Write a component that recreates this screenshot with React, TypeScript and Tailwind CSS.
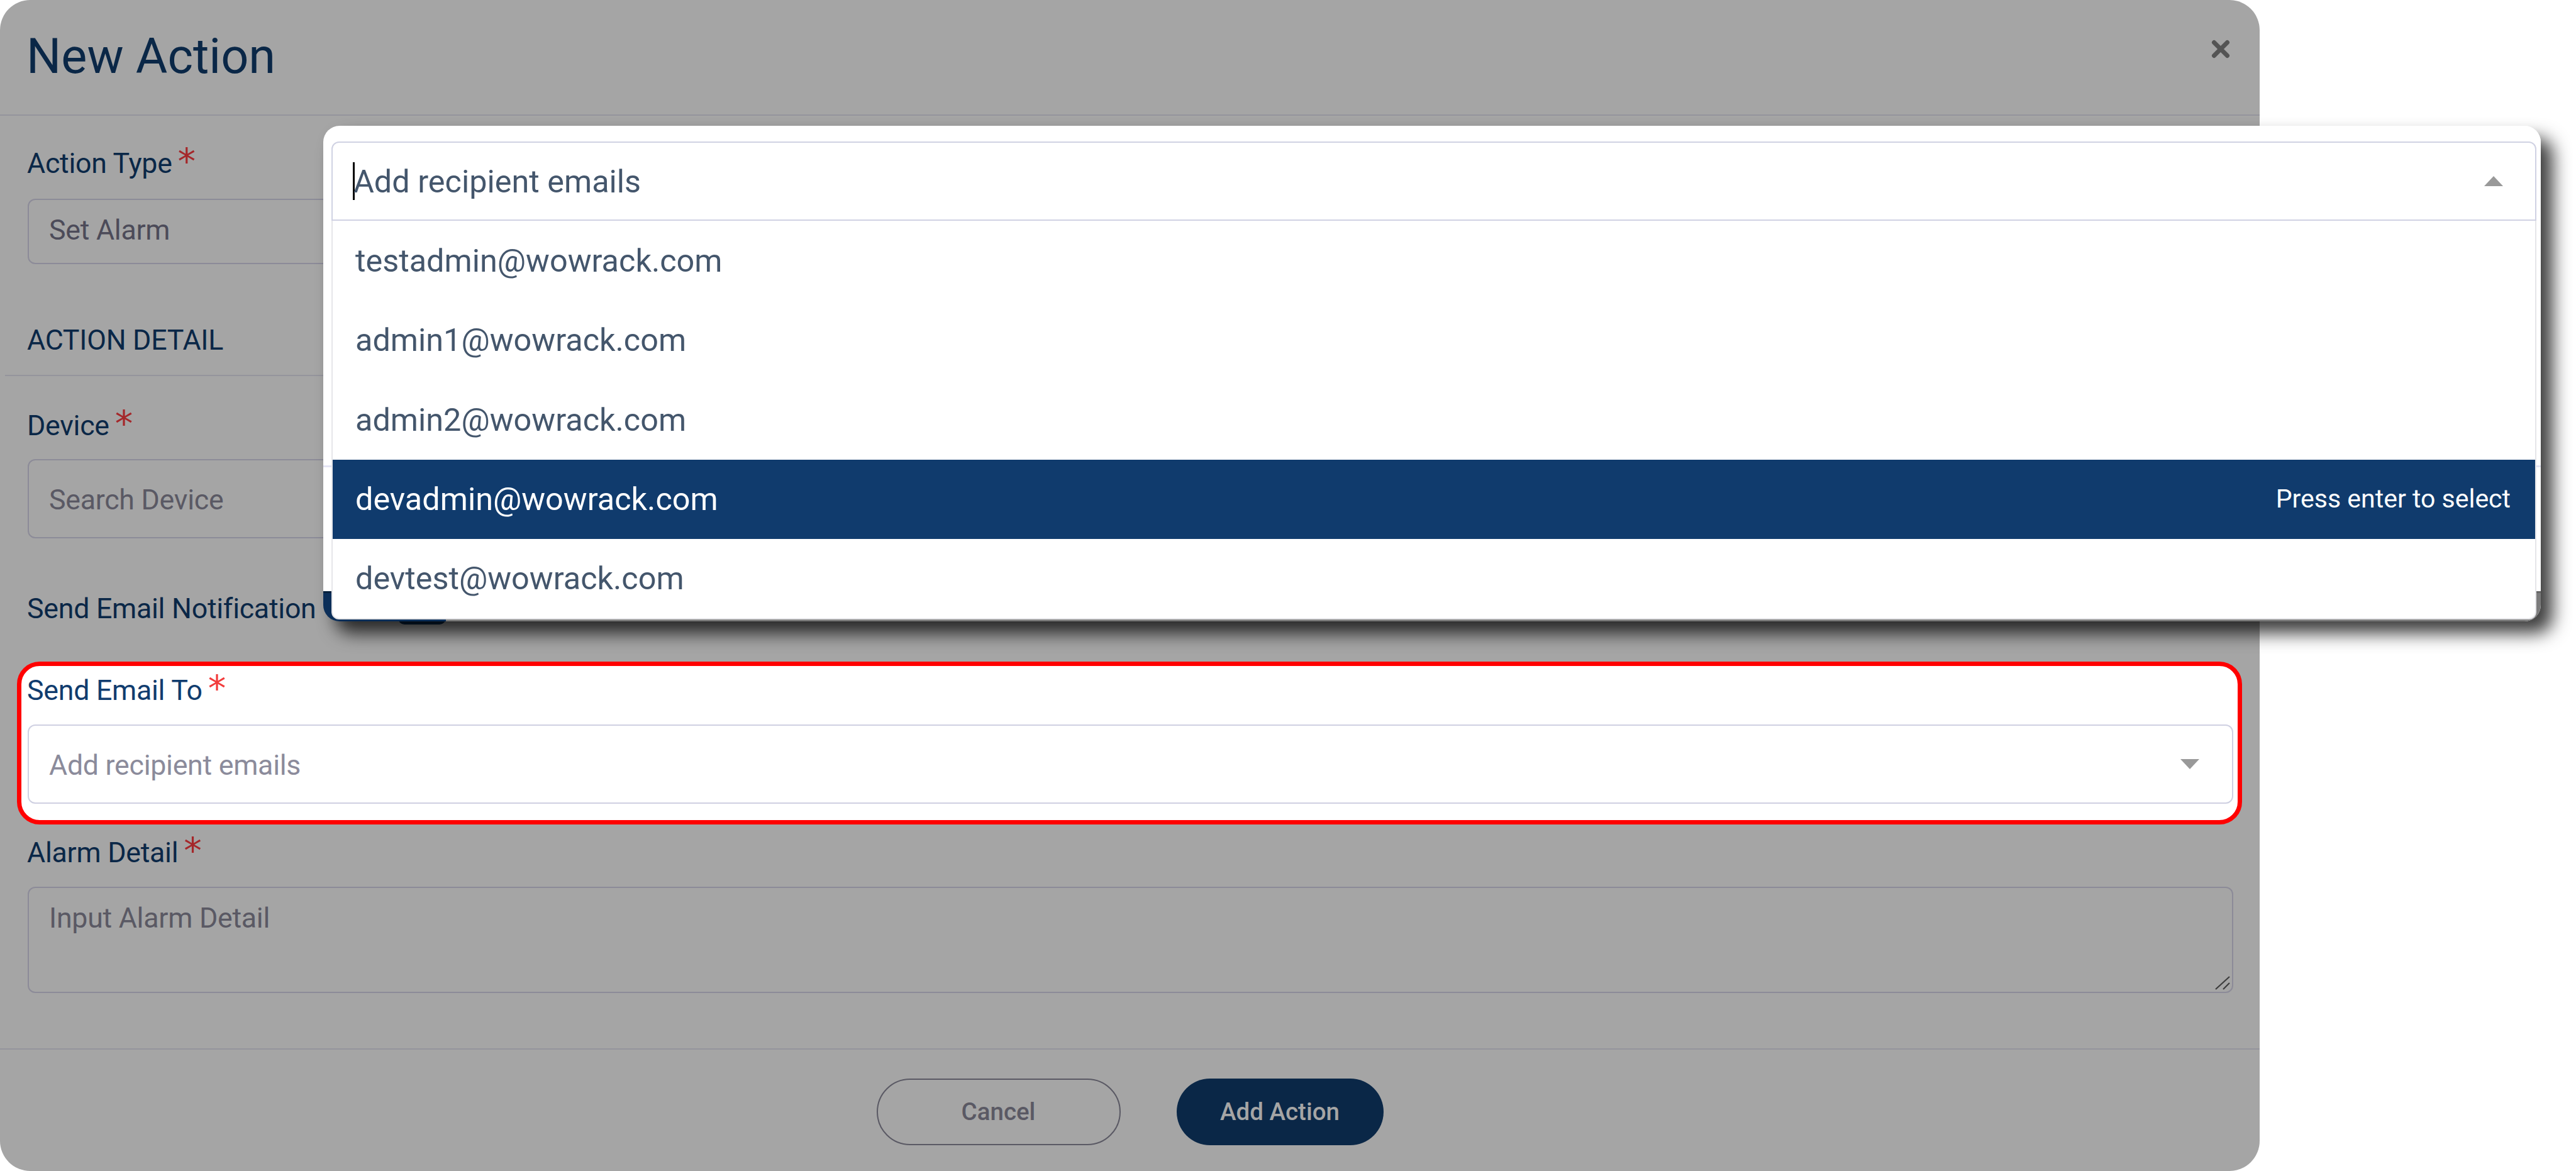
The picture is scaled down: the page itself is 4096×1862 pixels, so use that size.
import type { ReactNode } from 'react';

const emails = [
  'testadmin@wowrack.com',
  'admin1@wowrack.com',
  'admin2@wowrack.com',
  'devadmin@wowrack.com',
  'devtest@wowrack.com',
];

const activeEmail = 'devadmin@wowrack.com';

function Label({ children, required = false, bright = false }: { children: ReactNode; required?: boolean; bright?: boolean }) {
  return (
    <div className={`-ml-px flex h-[60px] text-[44.7px] leading-[60px] whitespace-nowrap ${bright ? 'text-[#103c6e]' : 'text-[#0a2747]'}`}>
      {children}
      {required && (
        <span
          className={`-mt-[2px] ml-[9px] font-['DejaVu_Sans',sans-serif] text-[57px] leading-[57px] ${
            bright ? 'text-[#f23b3b]' : 'text-[#a5272a]'
          }`}
        >
          *
        </span>
      )}
    </div>
  );
}

function Caret({ up = false }: { up?: boolean }) {
  return (
    <svg width="30" height="16" viewBox="0 0 30 16" fill="#999999">
      <path d={up ? 'M15 0L30 16H0Z' : 'M0 0H30L15 16Z'} />
    </svg>
  );
}

function RecipientMenu() {
  return (
    <div className="absolute top-[200px] left-[514px] h-[788px] w-[3526px] rounded-[26px] shadow-[19px_19px_28px_rgba(0,0,0,0.76)]">
      <div className="flex h-full flex-col overflow-hidden rounded-[26px] bg-[linear-gradient(#ffffff_0_740px,#666666_740px_743px,#7c7c7c_743px)] text-[50.4px] text-[#44566c]">
        <div className="relative flex h-full flex-col px-[13px] pt-[25px]">
          <div className="absolute top-[540px] left-0 h-[3px] w-full bg-[#e4e4f4]" />
          <div className="absolute top-[740px] left-0 h-[48px] w-[195px] border-t-[3px] border-[#07213d] bg-[#0c2f59]" />
          <div className="relative -mr-[6px] flex h-[126.4px] items-center justify-between rounded-t-[12px] border-2 border-[#d0d2e3] bg-white pr-[51px] pl-[32px]">
            <span className="h-[60px] w-[3px] shrink-0 bg-black" />
            <span className="-ml-[2px] flex-1 pt-[2px]">Add recipient emails</span>
            <Caret up />
          </div>
          <ul className="relative -mr-[6px] rounded-b-[12px] border-x-2 border-b-2 border-[#e6e6e9] bg-white">
            {emails.map((email) => (
              <li
                key={email}
                className={`flex h-[126.4px] items-center justify-between pr-[39px] pl-[36px] ${
                  email === activeEmail ? 'bg-[#103b6d] text-white' : ''
                }`}
              >
                {email}
                {email === activeEmail && <span className="text-[41px]">Press enter to select</span>}
              </li>
            ))}
          </ul>
        </div>
      </div>
    </div>
  );
}

export default function App() {
  return (
    <div className="relative h-[1862px] w-[4096px] overflow-hidden bg-white font-['Roboto',sans-serif]">
      <div className="flex h-full w-[3593px] flex-col overflow-hidden rounded-[48px] bg-[#a5a5a5]">
        <header className="flex h-[184px] shrink-0 items-start justify-between border-b-2 border-[#94949c] pr-[47px] pl-[42px]">
          <h1 className="pt-[40px] text-[77.5px] leading-[100px] text-[#0a2747]">New Action</h1>
          <button className="mt-[63px]" aria-label="Close">
            <svg width="30" height="30" viewBox="0 0 30 30" stroke="#545454" strokeWidth="7" strokeLinecap="round">
              <path d="M4.5 4.5L25.5 25.5M25.5 4.5L4.5 25.5" />
            </svg>
          </button>
        </header>

        <main className="flex-1 text-[44.7px] leading-[60px] tracking-[-0.26px]">
          <section className="pt-[46px] pr-[42px] pl-[44px]">
            <Label required>Action Type</Label>
            <div className="mt-[26px] flex h-[104px] items-center rounded-[12px] border-2 border-[#8c8b98] px-[32px] pb-[4px] text-[#4c4b59]">
              Set Alarm
            </div>
          </section>

          <section className="mt-[91px] ml-[8px] border-b-2 border-[#94949c] pb-[25px] pl-[36px]">
            <Label>ACTION DETAIL</Label>
          </section>

          <section className="mt-[49px] pr-[42px] pl-[44px]">
            <Label required>Device</Label>
            <div className="mt-[23px] flex h-[126px] items-center rounded-[12px] border-2 border-[#8c8b98] px-[32px] pt-[4px] text-[#5a5964]">
              Search Device
            </div>
            <div className="mt-[82px] flex">
              <Label>Send Email Notification</Label>
              <span className="ml-[130px] h-[55px] w-[76px] rounded-[10px] bg-[#0a2747]" />
            </div>
          </section>

          <section className="mt-[54px] mr-[28px] ml-[27px] h-[259px] rounded-[36px] border-[7px] border-[#ff0000] bg-white pt-[9px] pr-[7px] pl-[10px]">
            <Label required bright>Send Email To</Label>
            <div className="mt-[24px] flex h-[126px] items-center justify-between rounded-[12px] border-2 border-[#cfd0e2] pr-[52px] pl-[32px] text-[#8b8b9b]">
              <span className="pt-[4px]">Add recipient emails</span>
              <Caret />
            </div>
          </section>

          <section className="mt-[15px] pr-[42px] pl-[44px]">
            <Label required>Alarm Detail</Label>
            <div className="mt-[24px] flex h-[169px] items-start justify-between rounded-[12px] border-2 border-[#8c8b98] pt-[18px] pr-[3px] pb-[3px] pl-[32px] text-[#5a5964]">
              Input Alarm Detail
              <svg className="self-end" width="24" height="22" viewBox="0 0 24 22" stroke="#3c3c3c" strokeWidth="2.2">
                <path d="M1 21L23 1M13 21L23 11" />
              </svg>
            </div>
          </section>
        </main>

        <footer className="flex h-[195px] shrink-0 items-start justify-center gap-[89px] border-t-2 border-[#94949c] pt-[46px] text-[38.5px] font-medium">
          <button className="h-[106px] w-[388px] rounded-full border-2 border-[#5a5964] text-[#5a5964]">Cancel</button>
          <button className="h-[106px] w-[329px] rounded-full bg-[#0a2747] text-[#a5a5a5]">Add Action</button>
        </footer>
      </div>

      <RecipientMenu />
    </div>
  );
}
